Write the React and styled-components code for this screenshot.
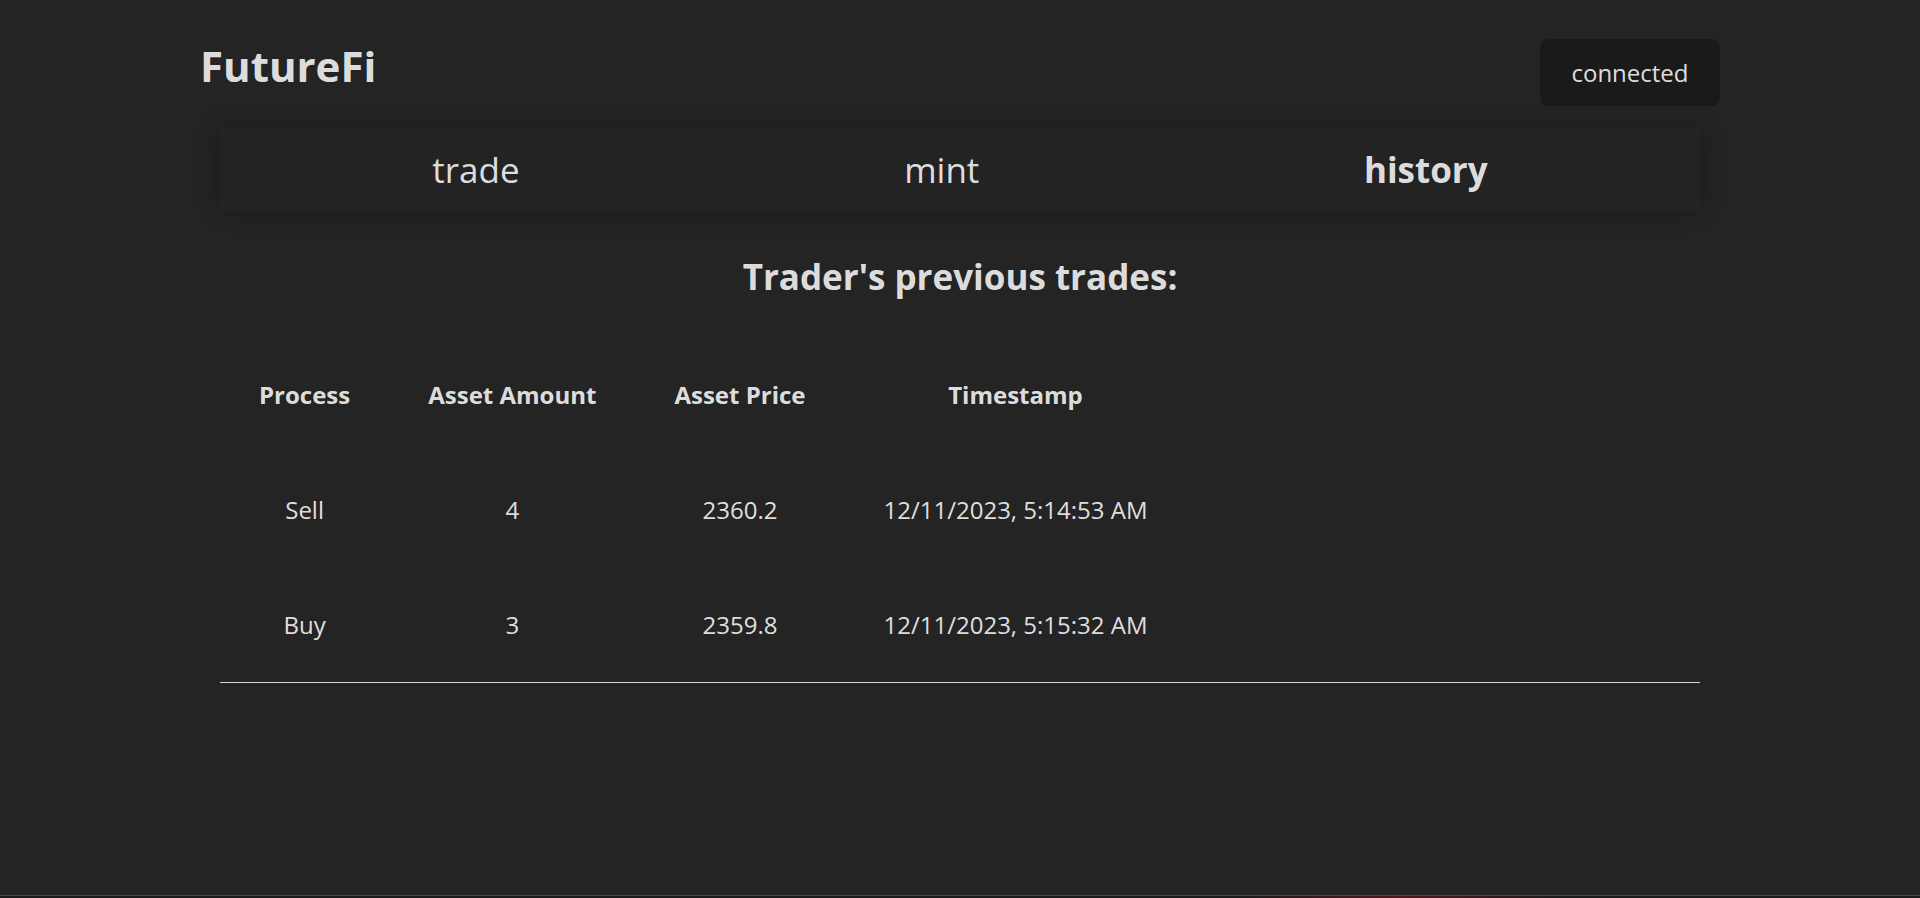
import React from 'react';
import styled, { createGlobalStyle } from 'styled-components';

const GlobalStyle = createGlobalStyle`
  body {
    margin: 0;
    background: #242424;
    color: rgba(255, 255, 255, 0.87);
    font-family: "Open Sans", "Noto Sans", sans-serif;
  }
`;

const Page = styled.div`
  display: flex;
  flex-direction: column;
  min-height: 100vh;
`;

const Main = styled.main`
  width: 1520px;
  min-height: 895px;
  margin: 0 auto;
`;

const Header = styled.header`
  display: flex;
  justify-content: space-between;
  align-items: flex-start;
  padding-top: 39px;
`;

const Title = styled.h1`
  margin: 0;
  font-size: 42px;
  font-weight: 700;
  line-height: 1.1;
  padding-top: 4px;
`;

const ConnectButton = styled.button`
  width: 180px;
  height: 67px;
  border: none;
  border-radius: 8px;
  background: #1a1a1a;
  color: inherit;
  font-family: inherit;
  font-size: 24px;
  font-weight: 500;
  cursor: pointer;
`;

const Nav = styled.nav`
  display: flex;
  justify-content: space-around;
  align-items: center;
  height: 84px;
  margin: 21px 20px 0;
  padding: 0 20px;
  background: #232323;
  box-shadow: 0 0 22px rgba(0, 0, 0, 0.28);
`;

const NavLink = styled.a`
  font-size: 35px;
  font-weight: ${(p) => (p.$active ? 700 : 400)};
  color: inherit;
  cursor: pointer;
`;

const Heading = styled.h2`
  margin: 44px 0 38px;
  text-align: center;
  font-size: 35px;
  font-weight: 700;
  line-height: 1.25;
`;

const TableWrap = styled.div`
  margin: 0 20px;
  border-bottom: 1px solid #d8d8d8;
`;

const Table = styled.table`
  border-collapse: collapse;
`;

const Cell = styled.td`
  padding: 41px 39px;
  height: 33px;
  text-align: center;
  font-size: 24px;
  font-weight: ${(p) => (p.$head ? 700 : 400)};
  white-space: nowrap;
`;

const Footer = styled.footer`
  height: 40px;
  border-top: 1px solid #4a4a4a;
  background: radial-gradient(ellipse 160px 30px at 1400px 0, rgba(120, 20, 30, 0.55), transparent), #1c1c1c;
`;

const trades = [
  { process: 'Sell', amount: 4, price: 2360.2, time: '12/11/2023, 5:14:53 AM' },
  { process: 'Buy', amount: 3, price: 2359.8, time: '12/11/2023, 5:15:32 AM' },
];

const App = () => {
  return (
    <Page>
      <GlobalStyle />
      <Main>
        <Header>
          <Title>FutureFi</Title>
          <ConnectButton>connected</ConnectButton>
        </Header>
        <Nav>
          <NavLink>trade</NavLink>
          <NavLink>mint</NavLink>
          <NavLink $active>history</NavLink>
        </Nav>
        <Heading>Trader's previous trades:</Heading>
        <TableWrap>
          <Table>
            <thead>
              <tr>
                <Cell as="th" $head>Process</Cell>
                <Cell as="th" $head>Asset Amount</Cell>
                <Cell as="th" $head>Asset Price</Cell>
                <Cell as="th" $head>Timestamp</Cell>
              </tr>
            </thead>
            <tbody>
              {trades.map((t, i) => (
                <tr key={i}>
                  <Cell>{t.process}</Cell>
                  <Cell>{t.amount}</Cell>
                  <Cell>{t.price}</Cell>
                  <Cell>{t.time}</Cell>
                </tr>
              ))}
            </tbody>
          </Table>
        </TableWrap>
      </Main>
      <Footer />
    </Page>
  );
};

export default App;
